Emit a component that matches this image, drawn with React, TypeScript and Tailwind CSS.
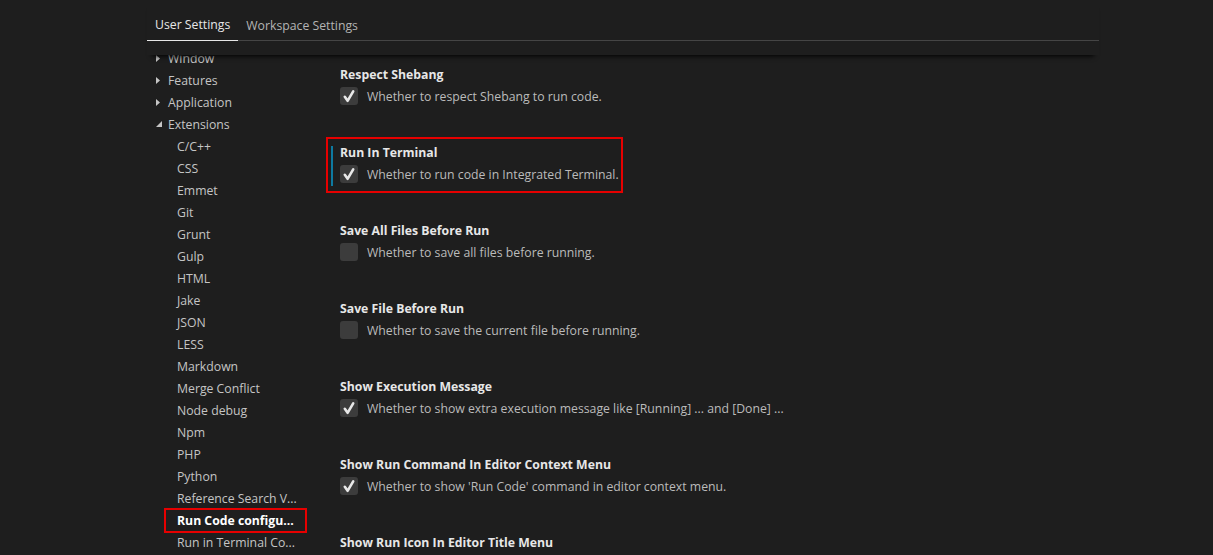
import type { ReactNode } from 'react';

interface SettingItem {
  title: string;
  description: string;
  checked: boolean;
  highlighted?: boolean;
}

const treeItems: { label: string; level: number; state?: 'collapsed' | 'expanded'; active?: boolean }[] = [
  { label: 'Window', level: 0, state: 'collapsed' },
  { label: 'Features', level: 0, state: 'collapsed' },
  { label: 'Application', level: 0, state: 'collapsed' },
  { label: 'Extensions', level: 0, state: 'expanded' },
  { label: 'C/C++', level: 1 },
  { label: 'CSS', level: 1 },
  { label: 'Emmet', level: 1 },
  { label: 'Git', level: 1 },
  { label: 'Grunt', level: 1 },
  { label: 'Gulp', level: 1 },
  { label: 'HTML', level: 1 },
  { label: 'Jake', level: 1 },
  { label: 'JSON', level: 1 },
  { label: 'LESS', level: 1 },
  { label: 'Markdown', level: 1 },
  { label: 'Merge Conflict', level: 1 },
  { label: 'Node debug', level: 1 },
  { label: 'Npm', level: 1 },
  { label: 'PHP', level: 1 },
  { label: 'Python', level: 1 },
  { label: 'Reference Search V...', level: 1 },
  { label: 'Run Code configu...', level: 1, active: true },
  { label: 'Run in Terminal Co...', level: 1 },
];

const settings: SettingItem[] = [
  { title: 'Respect Shebang', description: 'Whether to respect Shebang to run code.', checked: true },
  { title: 'Run In Terminal', description: 'Whether to run code in Integrated Terminal.', checked: true, highlighted: true },
  { title: 'Save All Files Before Run', description: 'Whether to save all files before running.', checked: false },
  { title: 'Save File Before Run', description: 'Whether to save the current file before running.', checked: false },
  { title: 'Show Execution Message', description: 'Whether to show extra execution message like [Running] ... and [Done] ...', checked: true },
  { title: 'Show Run Command In Editor Context Menu', description: "Whether to show 'Run Code' command in editor context menu.", checked: true },
  { title: 'Show Run Icon In Editor Title Menu', description: 'Whether to show Run Icon in editor title menu.', checked: true },
];

function Twisty({ state }: { state?: 'collapsed' | 'expanded' }) {
  if (!state) return null;
  return (
    <span className="w-[12px] flex items-center">
      {state === 'collapsed' ? (
        <svg width="4" height="7" viewBox="0 0 4 7">
          <path d="M0 0 L4 3.5 L0 7 Z" fill="#c5c5c5" />
        </svg>
      ) : (
        <svg width="6" height="6" viewBox="0 0 6 6">
          <path d="M6 0 L6 6 L0 6 Z" fill="#c5c5c5" />
        </svg>
      )}
    </span>
  );
}

function Checkbox({ checked }: { checked: boolean }) {
  return (
    <span className="w-[18px] h-[18px] rounded-[3px] bg-[#3c3c3c] flex items-center justify-center shrink-0">
      {checked && (
        <svg width="14" height="14" viewBox="0 0 14 14">
          <path d="M2.8 7.8 L5.6 11.8 L11.2 2.4" fill="none" stroke="#e8e8e8" strokeWidth="2.6" strokeLinecap="round" strokeLinejoin="round" />
        </svg>
      )}
    </span>
  );
}

function Tab({ children, active }: { children: ReactNode; active?: boolean }) {
  return (
    <div
      className={`h-[41px] px-2 pt-[8px] flex items-center -mb-px ${active ? 'border-b border-[#e7e7e7] text-[#e7e7e7]' : 'text-[#b4b4b4]'}`}
    >
      <span className="relative top-px">{children}</span>
    </div>
  );
}

export default function App() {
  return (
    <div
      className="w-[1213px] h-[555px] bg-[#1e1e1e] overflow-hidden text-[12.25px] leading-[22px]"
      style={{ fontFamily: '"Open Sans", "Noto Sans", sans-serif' }}
    >
      <div className="ml-[147px] w-[952px] h-full flex flex-col">
        {/* tabs */}
        <div className="relative z-10 h-[55px] shrink-0 bg-[#1e1e1e] shadow-[0_6px_5px_-5px_#000]">
          <div className="flex h-[41px] border-b border-[#454545]">
            <Tab active>User Settings</Tab>
            <Tab>Workspace Settings</Tab>
          </div>
        </div>

        <div className="flex flex-1 min-h-0">
          {/* tree */}
          <nav className="w-[179px] shrink-0 overflow-hidden">
            <div className="-mt-[8px]">
              {treeItems.map((item) => (
                <div
                  key={item.label}
                  className={`relative h-[22px] flex items-center whitespace-nowrap ${item.level === 0 ? 'pl-[9px]' : 'pl-[30px]'} ${item.active ? 'font-bold text-white' : 'text-[#c5c5c5]'}`}
                >
                  <Twisty state={item.state} />
                  <span className="relative top-px">{item.label}</span>
                  {item.active && (
                    <span className="absolute left-[17px] right-[19px] top-[-1px] bottom-[-2px] border-2 border-[#e60000]" />
                  )}
                </div>
              ))}
            </div>
          </nav>

          {/* settings */}
          <main className="flex-1 pt-[4px]">
            {settings.map((s) => (
              <div key={s.title} className="relative h-[78px] pl-[14px]">
                <div className="pt-[4px] font-bold text-[#e7e7e7]">
                  <span className="relative top-px">{s.title}</span>
                </div>
                <div className="flex items-center gap-[9px] text-[#bbbbbb]">
                  <Checkbox checked={s.checked} />
                  <span className="relative top-px">{s.description}</span>
                </div>
                {s.highlighted && (
                  <>
                    <span className="absolute left-[5px] top-[9px] h-[40px] w-[2px] bg-[#0e7aa0]" />
                    <span className="absolute left-0 top-0 w-[297px] h-[56px] border-2 border-[#e60000]" />
                  </>
                )}
              </div>
            ))}
          </main>
        </div>
      </div>
    </div>
  );
}
